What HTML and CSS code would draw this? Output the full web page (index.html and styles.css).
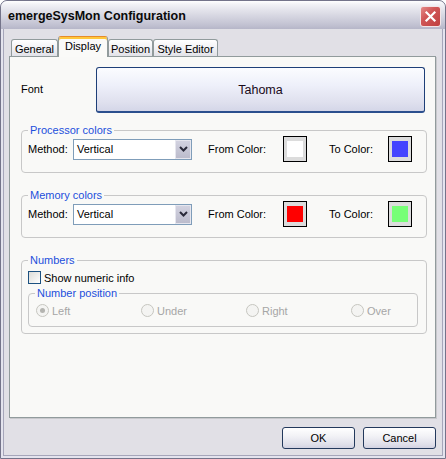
FILE: index.html
```html
<!DOCTYPE html>
<html>
<head>
<meta charset="utf-8">
<title>emergeSysMon Configuration</title>
<link rel="stylesheet" href="styles.css">
</head>
<body>
<div class="window">
  <div class="titlebar">
    <span class="title">emergeSysMon Configuration</span>
    <div class="close">
      <svg width="19" height="19" viewBox="0 0 19 19"><path d="M5.5 5.5 L13.5 13.5 M13.5 5.5 L5.5 13.5" stroke="#fff" stroke-width="2.2" stroke-linecap="square" fill="none"/></svg>
    </div>
  </div>
  <div class="body">
    <div class="tabs">
      <div class="tab t-general">General</div>
      <div class="tab active t-display">Display</div>
      <div class="tab t-position">Position</div>
      <div class="tab t-style">Style Editor</div>
    </div>
    <div class="panel">
      <div class="font-row">
        <span class="font-label">Font</span>
        <div class="font-btn">Tahoma</div>
      </div>

      <div class="group colors first">
        <div class="legend">Processor colors</div>
        <div class="color-row">
          <span class="lbl-method">Method:</span>
          <div class="select"><span class="select-text">Vertical</span><span class="select-btn"><svg width="9" height="6" viewBox="0 0 9 6"><path d="M1 1 L4.5 4.5 L8 1" stroke="#2a2a3a" stroke-width="2" fill="none"/></svg></span></div>
          <span class="lbl-from">From Color:</span>
          <div class="swatch"><div class="fill c-white"></div></div>
          <span class="lbl-to">To Color:</span>
          <div class="swatch"><div class="fill c-blue"></div></div>
        </div>
      </div>

      <div class="group colors">
        <div class="legend">Memory colors</div>
        <div class="color-row">
          <span class="lbl-method">Method:</span>
          <div class="select"><span class="select-text">Vertical</span><span class="select-btn"><svg width="9" height="6" viewBox="0 0 9 6"><path d="M1 1 L4.5 4.5 L8 1" stroke="#2a2a3a" stroke-width="2" fill="none"/></svg></span></div>
          <span class="lbl-from">From Color:</span>
          <div class="swatch"><div class="fill c-red"></div></div>
          <span class="lbl-to">To Color:</span>
          <div class="swatch"><div class="fill c-green"></div></div>
        </div>
      </div>

      <div class="group numbers">
        <div class="legend">Numbers</div>
        <div class="check-row">
          <span class="checkbox"></span>
          <span class="check-label">Show numeric info</span>
        </div>
        <div class="group inner">
          <div class="legend inner-legend">Number position</div>
          <div class="radio-row">
            <div class="option"><span class="radio checked"><span class="dot"></span></span><span class="opt-label">Left</span></div>
            <div class="option"><span class="radio"></span><span class="opt-label">Under</span></div>
            <div class="option"><span class="radio"></span><span class="opt-label">Right</span></div>
            <div class="option last"><span class="radio"></span><span class="opt-label">Over</span></div>
          </div>
        </div>
      </div>
    </div>
    <div class="footer">
      <div class="btn">OK</div>
      <div class="btn">Cancel</div>
    </div>
  </div>
</div>
</body>
</html>
```
FILE: styles.css
```css
html, body {
  margin: 0;
  padding: 0;
  background: #ffffff;
}

body {
  font-family: "Liberation Sans", Arial, sans-serif;
  font-size: 11px;
  color: #000;
}

.window {
  width: 446px;
  height: 459px;
  box-sizing: border-box;
  border: 1px solid #74748a;
  border-radius: 7px 7px 0 0;
  background: #e4e4ee;
  padding: 0 2px 2px 2px;
  display: flex;
  flex-direction: column;
  overflow: hidden;
}

.titlebar {
  height: 28px;
  flex: 0 0 28px;
  margin: 0 -2px;
  padding: 2px 4px 0 7px;
  box-sizing: border-box;
  display: flex;
  align-items: center;
  justify-content: space-between;
  background: linear-gradient(to bottom, #ffffff 0%, #f2f2f6 12%, #e2e2ea 35%, #d2d2de 60%, #c2c2d2 85%, #b6b6c8 100%);
  border-radius: 6px 6px 0 0;
}

.title {
  font-weight: bold;
  font-size: 12.5px;
  color: #0a0a0a;
}

.close {
  width: 21px;
  height: 21px;
  box-sizing: border-box;
  border: 1px solid #f3e4e6;
  border-radius: 3px;
  background: linear-gradient(135deg, #e48a88 0%, #d05656 40%, #c04040 100%);
  display: flex;
  align-items: center;
  justify-content: center;
}

.body {
  flex: 1;
  background: #e1e0e6;
  border: 1px solid #a6a6ba;
  border-top: none;
  padding: 7px 6px 6px 5px;
  display: flex;
  flex-direction: column;
}

.tabs {
  display: flex;
  align-items: flex-end;
  height: 20px;
  padding-left: 2px;
  position: relative;
  z-index: 1;
}

.tab {
  height: 17px;
  box-sizing: border-box;
  border: 1px solid #919b9c;
  border-bottom: none;
  border-radius: 3px 3px 0 0;
  background: linear-gradient(to bottom, #ffffff, #ececf0 70%, #e2e2e8);
  display: flex;
  align-items: center;
  justify-content: center;
  padding-top: 1px;
}

.t-general { width: 47px; }
.t-display { width: 50px; }
.t-position { width: 45px; }
.t-style { width: 65px; }

.tab.active {
  height: 21px;
  margin-bottom: -1px;
  background: #fafaf8;
  border-top: 1px solid #e68b2c;
  box-shadow: inset 0 2px 0 #ffc83c;
  padding-top: 0;
  padding-bottom: 3px;
}

.panel {
  width: 427px;
  height: 362px;
  box-sizing: border-box;
  border: 1px solid #919b9c;
  background: #f9f9f7;
  box-shadow: 1px 1px 0 #c8c8cc;
  padding: 10px 8px 0 11px;
  display: flex;
  flex-direction: column;
}

.font-row {
  display: flex;
  align-items: center;
  height: 46px;
}

.font-label {
  width: 75px;
  margin-top: -3px;
}

.font-btn {
  width: 329px;
  height: 46px;
  box-sizing: border-box;
  border: 1px solid #1e3f78;
  border-bottom: 2px solid #2b4f8e;
  border-radius: 3px;
  background: linear-gradient(to bottom, #fbfcff 0%, #eef0fa 40%, #dfe0ee 80%, #d4d6e8 100%);
  display: flex;
  align-items: center;
  justify-content: center;
  font-size: 12.5px;
  color: #1a0a1a;
}

.group {
  border: 1px solid #c8c8c8;
  border-radius: 4px;
  padding: 0 0 10px 6px;
  margin-top: 22px;
}

.group.first {
  margin-top: 17px;
}

.legend {
  width: fit-content;
  margin: -7px 0 0 0;
  padding: 0 2px;
  line-height: 13px;
  height: 13px;
  background: #f9f9f7;
  color: #1c4fdc;
}

.color-row {
  display: flex;
  align-items: center;
  height: 26px;
  margin-top: -1px;
}

.lbl-method {
  width: 45px;
}

.select {
  width: 119px;
  height: 21px;
  box-sizing: border-box;
  border: 1px solid #7f9db9;
  background: #fff;
  display: flex;
  align-items: center;
  justify-content: space-between;
}

.select-text {
  padding-left: 3px;
}

.select-btn {
  width: 16px;
  height: 19px;
  box-sizing: border-box;
  border: 1px solid #e6e6ee;
  background: linear-gradient(to bottom, #d2d2e0, #bcbccc);
  display: flex;
  align-items: center;
  justify-content: center;
}

.lbl-from {
  width: 75px;
  margin-left: 16px;
}

.lbl-to {
  width: 59px;
  margin-left: 22px;
}

.swatch {
  width: 24px;
  height: 26px;
  box-sizing: border-box;
  border: 1px solid #000;
  background: #dcdcdc;
  padding: 4px 3px;
}

.fill {
  width: 16px;
  height: 16px;
}

.c-white { background: #ffffff; }
.c-blue { background: #4444ff; }
.c-red { background: #ff0000; }
.c-green { background: #77ff77; }

.numbers {
  padding-bottom: 6px;
}

.check-row {
  display: flex;
  align-items: center;
  height: 13px;
  margin-top: 4px;
}

.checkbox {
  width: 13px;
  height: 13px;
  box-sizing: border-box;
  border: 1px solid #1c5180;
  background: linear-gradient(135deg, #dcdcd8 0%, #f0f0ee 60%, #ffffff 100%);
}

.check-label {
  margin-left: 3px;
}

.group.inner {
  margin: 9px 8px 0 0;
  padding: 0 0 9px 7px;
}

.inner-legend {
  margin-left: -1px;
}

.radio-row {
  display: flex;
  align-items: center;
  height: 13px;
  margin-top: 4px;
}

.option {
  flex: 0 0 105px;
  display: flex;
  align-items: center;
}

.option.last {
  flex: 0 0 auto;
}

.radio {
  width: 13px;
  height: 13px;
  flex: 0 0 13px;
  box-sizing: border-box;
  border: 1px solid #c6c6c0;
  border-radius: 50%;
  background: #f4f4f2;
  display: flex;
  align-items: center;
  justify-content: center;
}

.dot {
  width: 5px;
  height: 5px;
  border-radius: 50%;
  background: #b4b4b0;
}

.opt-label {
  margin-left: 3px;
  color: #a6a6a6;
}

.footer {
  display: flex;
  justify-content: flex-end;
  margin-top: 9px;
  gap: 8px;
}

.btn {
  width: 73px;
  height: 22px;
  box-sizing: border-box;
  border: 1px solid #23395c;
  border-radius: 3px;
  background: linear-gradient(to bottom, #ffffff 0%, #f2f2f6 40%, #e0e0ea 80%, #d2d2e2 100%);
  display: flex;
  align-items: center;
  justify-content: center;
}
```
